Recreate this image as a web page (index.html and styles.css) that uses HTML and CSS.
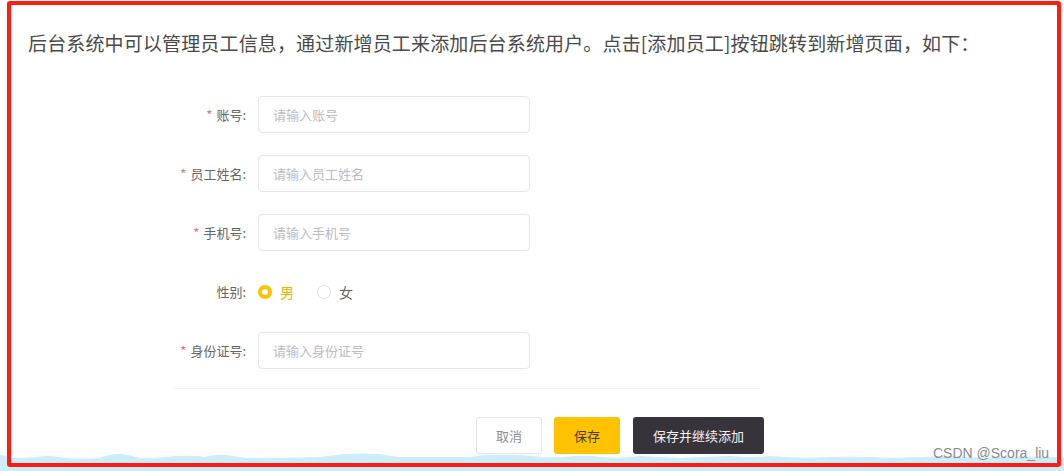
FILE: index.html
```html
<!DOCTYPE html>
<html lang="zh">
<head>
<meta charset="utf-8">
<link rel="stylesheet" href="styles.css">
</head>
<body>
<div class="frame">
  <p class="intro">后台系统中可以管理员工信息，通过新增员工来添加后台系统用户。点击[添加员工]按钮跳转到新增页面，如下：</p>
  <div class="form">
    <div class="row">
      <label class="label"><span class="req">*</span>账号:</label>
      <div class="input">请输入账号</div>
    </div>
    <div class="row">
      <label class="label"><span class="req">*</span>员工姓名:</label>
      <div class="input">请输入员工姓名</div>
    </div>
    <div class="row">
      <label class="label"><span class="req">*</span>手机号:</label>
      <div class="input">请输入手机号</div>
    </div>
    <div class="row row-radio">
      <label class="label">性别:</label>
      <div class="radios">
        <span class="radio checked"><span class="dot"></span>男</span>
        <span class="radio"><span class="dot"></span>女</span>
      </div>
    </div>
    <div class="row">
      <label class="label"><span class="req">*</span>身份证号:</label>
      <div class="input">请输入身份证号</div>
    </div>
  </div>
  <div class="divider"></div>
  <div class="actions">
    <button class="btn btn-cancel">取消</button>
    <button class="btn btn-save">保存</button>
    <button class="btn btn-dark">保存并继续添加</button>
  </div>
</div>
<svg class="wave" viewBox="0 0 1064 18" preserveAspectRatio="none" width="1064" height="18">
  <path d="M0 2 Q6 3 12 5 Q30 5 45 3 Q55 3 65 5 Q85 6 100 5 Q110 1 118 1 Q126 1 140 5 Q160 5 175 3 Q195 2 205 4 Q215 1 225 2 Q235 3 245 5 Q280 5 320 4 Q335 2 345 1 Q365 0 380 1 Q390 3 400 4 Q440 4 470 4 Q480 2 490 2 Q520 1 540 4 Q560 5 575 3 Q590 2 600 4 Q620 6 640 3 Q660 4 680 5 Q700 4 730 3 Q750 5 770 3 Q800 6 830 4 Q860 3 890 5 Q920 4 950 3 Q980 5 1000 4 Q1030 3 1064 4 L1064 18 L0 18 Z" fill="#cdedf9"/>
</svg>
<div class="outline"></div>
<span class="watermark">CSDN @Scora_liu</span>
</body>
</html>
```
FILE: styles.css
```css
* { box-sizing: border-box; }
html {
  margin: 0;
  padding: 0;
  overflow: hidden;
}
body {
  margin: 0;
  padding: 1px 0 0 0;
  width: 1064px;
  height: 471px;
  position: relative;
  background: #fff;
  font-family: "Noto Sans CJK SC", "Noto Sans", sans-serif;
  overflow: hidden;
}
.frame {
  margin: 0 3px 0 7px;
  height: 466px;
  padding: 4px 4px 4px 21px;
}
.outline {
  position: absolute;
  left: 7px;
  top: 1px;
  right: 3px;
  bottom: 4px;
  border: 4px solid #fc1d10;
  border-radius: 3px;
  z-index: 3;
  pointer-events: none;
}
.intro {
  margin: 0;
  padding-top: 24px;
  font-size: 19px;
  line-height: 28px;
  color: #4a4a4a;
  letter-spacing: 0.15px;
}
.form {
  margin-top: 39px;
  margin-left: 118px;
  display: flex;
  flex-direction: column;
  gap: 22px;
}
.row {
  display: flex;
  align-items: center;
  gap: 12px;
  height: 37px;
}
.label {
  width: 100px;
  text-align: right;
  font-size: 13px;
  color: #666;
}
.req {
  color: #f56c6c;
  margin-right: 4px;
}
.input {
  width: 272px;
  height: 37px;
  border: 1px solid #e4e6eb;
  border-radius: 4px;
  padding-left: 14px;
  display: flex;
  align-items: center;
  font-size: 13px;
  color: #bcbcc2;
}
.radios {
  display: flex;
  gap: 23px;
  padding-top: 1px;
}
.radio {
  display: flex;
  align-items: center;
  gap: 8px;
  font-size: 14px;
  color: #666;
}
.radio .dot {
  width: 14px;
  height: 14px;
  border-radius: 50%;
  border: 1px solid #dcdfe6;
  background: #fff;
}
.radio.checked { color: #f5b100; }
.radio.checked .dot {
  border: 4px solid #ffc200;
  background: #fff;
}
.divider {
  margin: 19px 0 0 147px;
  width: 585px;
  height: 1px;
  background: #f0f0f2;
}
.actions {
  margin: 28px 0 0 448px;
  display: flex;
  gap: 12px;
}
.btn {
  height: 37px;
  border-radius: 3px;
  font-family: inherit;
  font-size: 13px;
  border: 1px solid transparent;
  padding: 0;
}
.btn-cancel {
  width: 66px;
  background: #fff;
  border-color: #e4e6eb;
  color: #8e8e96;
}
.btn-save {
  width: 66px;
  background: #ffc200;
  color: #4a3b20;
}
.btn-dark {
  width: 131px;
  margin-left: 1px;
  background: #36333a;
  color: #f2f2f2;
}
.wave {
  position: absolute;
  left: 0;
  bottom: 0;
  z-index: 2;
  display: block;
}
.watermark {
  position: absolute;
  left: 933px;
  top: 444px;
  font-family: "Liberation Sans", Arial, sans-serif;
  font-size: 14px;
  line-height: 18px;
  color: #8a8a8a;
  z-index: 4;
}
```
